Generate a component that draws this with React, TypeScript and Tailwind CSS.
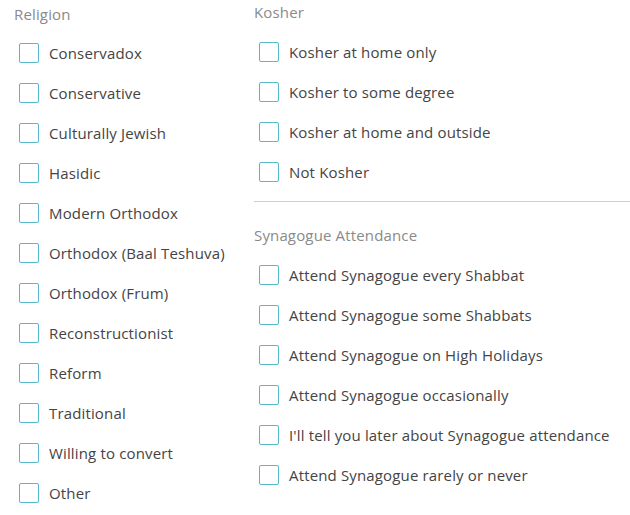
import React from "react";

const religion = [
  "Conservadox",
  "Conservative",
  "Culturally Jewish",
  "Hasidic",
  "Modern Orthodox",
  "Orthodox (Baal Teshuva)",
  "Orthodox (Frum)",
  "Reconstructionist",
  "Reform",
  "Traditional",
  "Willing to convert",
  "Other",
];

const kosher = [
  "Kosher at home only",
  "Kosher to some degree",
  "Kosher at home and outside",
  "Not Kosher",
];

const synagogue = [
  "Attend Synagogue every Shabbat",
  "Attend Synagogue some Shabbats",
  "Attend Synagogue on High Holidays",
  "Attend Synagogue occasionally",
  "I'll tell you later about Synagogue attendance",
  "Attend Synagogue rarely or never",
];

function Row({ label }: { label: string }) {
  return (
    <label className="flex h-[40px] items-center pl-[5px]">
      <span className="box-border h-[20px] w-[20px] shrink-0 rounded-[2px] border-[1.5px] border-[#55b8cc] bg-white" />
      <span className="ml-[10px] text-[15px] leading-[20px] tracking-[0.15px] text-[#444444]">{label}</span>
    </label>
  );
}

export default function App() {
  return (
    <div
      className="grid h-[515px] w-[630px] grid-cols-[240px_1fr] bg-white"
      style={{ fontFamily: '"Open Sans", "Liberation Sans", sans-serif' }}
    >
      <div className="pl-[14px] pt-[4px]">
        <div className="text-[15px] leading-[20px] tracking-[0.15px] text-[#8a8a8a]">Religion</div>
        <div className="mt-[9px] flex flex-col">
          {religion.map((r) => (
            <Row key={r} label={r} />
          ))}
        </div>
      </div>
      <div className="pl-[14px] pt-[2px]">
        <div className="text-[15px] leading-[20px] tracking-[0.15px] text-[#8a8a8a]">Kosher</div>
        <div className="mt-[10px] flex flex-col">
          {kosher.map((r) => (
            <Row key={r} label={r} />
          ))}
        </div>
        <div className="mt-[9px] h-px bg-[#d0d0d0]" />
        <div className="mt-[23px] text-[15px] leading-[20px] tracking-[0.15px] text-[#8a8a8a]">Synagogue Attendance</div>
        <div className="mt-[10px] flex flex-col">
          {synagogue.map((r) => (
            <Row key={r} label={r} />
          ))}
        </div>
      </div>
    </div>
  );
}
